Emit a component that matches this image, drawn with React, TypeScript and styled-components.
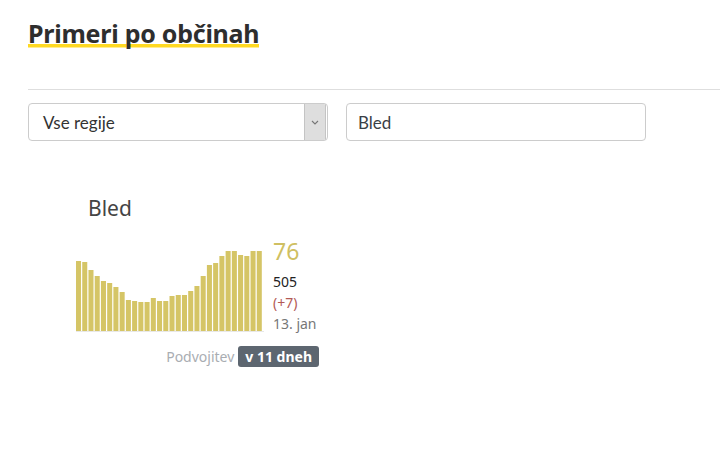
import React from "react";
import styled, { createGlobalStyle } from "styled-components";

const Global = createGlobalStyle`
  html, body { margin: 0; padding: 0; background: #fff; }
  body { font-family: "Noto Sans", "Open Sans", sans-serif; color: #333; }
`;

const Page = styled.div`
  padding: 0 0 0 28px;
  width: 692px;
  display: flow-root;
`;

const Title = styled.h2`
  display: block;
  width: fit-content;
  margin: 18px 0 0;
  font-family: "Noto Sans", sans-serif;
  font-weight: 700;
  font-size: 25px;
  line-height: 30px;
  color: #2e2e2e;
  letter-spacing: -0.25px;
  background: linear-gradient(#ffd922, #ffd922) no-repeat 0 26px / 100% 3.5px;
`;

const Rule = styled.div`
  height: 1px;
  background: #dedede;
  margin-top: 41px;
`;

const Filters = styled.div`
  display: flex;
  gap: 18px;
  margin-top: 13px;
`;

const SelectBox = styled.div`
  width: 300px;
  height: 38px;
  box-sizing: border-box;
  border: 1px solid #ccc;
  border-radius: 4px;
  display: flex;
  align-items: center;
  padding-left: 14px;
  font-family: Lato, sans-serif;
  font-size: 17px;
  color: #333;
  overflow: hidden;
`;

const SelectLabel = styled.span`
  flex: 1;
`;

const SelectArrow = styled.div`
  width: 20px;
  height: 36px;
  background: #dedede;
  border-left: 1px solid #c4c4c4;
  border-right: 1px solid #c4c4c4;
  margin-right: 1px;
  display: flex;
  align-items: center;
  justify-content: center;
`;

const InputBox = styled.div`
  width: 300px;
  height: 38px;
  box-sizing: border-box;
  border: 1px solid #ccc;
  border-radius: 4px;
  display: flex;
  align-items: center;
  padding-left: 11px;
  font-family: Lato, sans-serif;
  font-size: 17px;
  color: #3a3f46;
`;

const Card = styled.div`
  margin: 54px 0 0 48px;
  width: 250px;
`;

const CardTitle = styled.div`
  padding-left: 12px;
  font-family: "Noto Sans", sans-serif;
  font-size: 21px;
  font-weight: 400;
  color: #454545;
  line-height: 26px;
`;

const ChartRow = styled.div`
  display: flex;
  align-items: flex-start;
  gap: 9px;
  margin-top: 29px;
`;

const Stats = styled.div`
  display: flex;
  flex-direction: column;
  font-family: "Noto Sans", sans-serif;
  margin-top: -12px;
`;

const Big = styled.div`
  font-size: 23px;
  line-height: 26px;
  color: #cfbf62;
  margin-bottom: 7px;
`;

const Stat = styled.div<{ $color: string }>`
  font-size: 14px;
  line-height: 21px;
  color: ${(p) => p.$color};
`;

const Footer = styled.div`
  display: flex;
  justify-content: flex-end;
  align-items: center;
  gap: 4px;
  margin-top: 12px;
  width: 243px;
  font-family: "Noto Sans", sans-serif;
  font-size: 14px;
`;

const Muted = styled.span`
  color: #a9adb2;
`;

const Badge = styled.span`
  display: inline-block;
  background: #5d6670;
  color: #fff;
  font-weight: 700;
  border-radius: 3px;
  padding: 0 7px;
  line-height: 21px;
`;

const heights = [70, 69, 61, 55, 50, 48, 44, 39, 31, 30, 29, 29, 33, 30, 30, 35, 36, 36, 40, 45, 55, 66, 68, 75, 80, 80, 76, 75, 80, 80];

const Chart = () => {
  const pitch = 187 / 30;
  return (
    <svg width={188} height={82} viewBox="0 0 188 82">
      <line x1={0} x2={188} y1={81.5} y2={81.5} stroke="#e8e8e8" strokeWidth={1} />
      {heights.map((h, i) => (
        <rect key={i} x={i * pitch} y={81 - h} width={pitch - 1.2} height={h} fill="#d5c566" />
      ))}
    </svg>
  );
};

export default function App() {
  return (
    <>
      <Global />
      <Page>
        <Title>Primeri po občinah</Title>
        <Rule />
        <Filters>
          <SelectBox>
            <SelectLabel>Vse regije</SelectLabel>
            <SelectArrow>
              <svg width="8" height="5" viewBox="0 0 8 5">
                <path d="M1 1 L4 4 L7 1" fill="none" stroke="#777" strokeWidth="1.1" />
              </svg>
            </SelectArrow>
          </SelectBox>
          <InputBox>Bled</InputBox>
        </Filters>
        <Card>
          <CardTitle>Bled</CardTitle>
          <ChartRow>
            <Chart />
            <Stats>
              <Big>76</Big>
              <Stat $color="#222">505</Stat>
              <Stat $color="#b35a55">(+7)</Stat>
              <Stat $color="#777">13. jan</Stat>
            </Stats>
          </ChartRow>
          <Footer>
            <Muted>Podvojitev</Muted>
            <Badge>v 11 dneh</Badge>
          </Footer>
        </Card>
      </Page>
    </>
  );
}
